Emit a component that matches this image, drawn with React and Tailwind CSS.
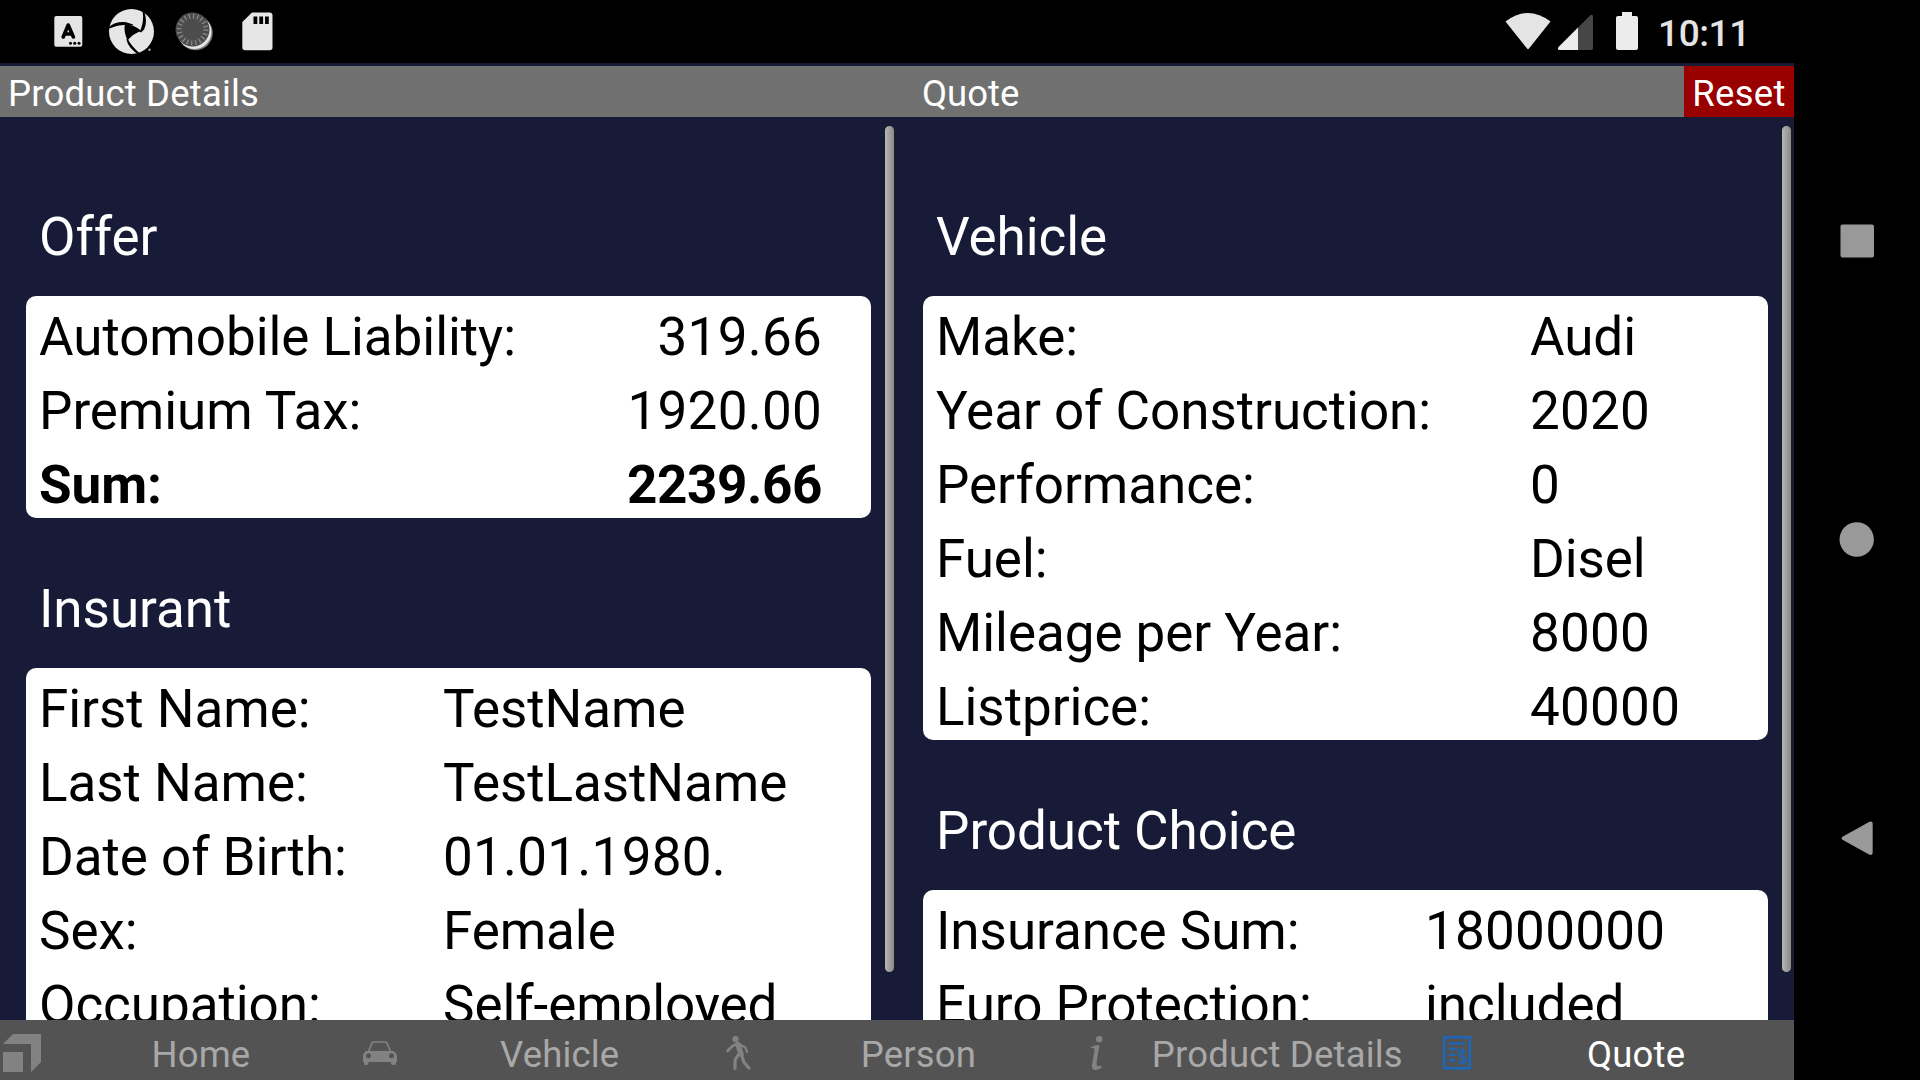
const offer = [
  ["Automobile Liability:", "319.66"],
  ["Premium Tax:", "1920.00"],
  ["Sum:", "2239.66"],
];
const insurant = [
  ["First Name:", "TestName"],
  ["Last Name:", "TestLastName"],
  ["Date of Birth:", "01.01.1980."],
  ["Sex:", "Female"],
  ["Occupation:", "Self-employed"],
];
const vehicle = [
  ["Make:", "Audi"],
  ["Year of Construction:", "2020"],
  ["Performance:", "0"],
  ["Fuel:", "Disel"],
  ["Mileage per Year:", "8000"],
  ["Listprice:", "40000"],
];
const product = [
  ["Insurance Sum:", "18000000"],
  ["Euro Protection:", "included"],
];

function valueTracking(value, bold) {
  if (bold) return "tracking-[-0.4px]";
  return /^[\d.]+$/.test(value) ? "tracking-[0.25px]" : "tracking-[-0.08px]";
}

function Section({ title, rows, cols, numeric }) {
  return (
    <section className="flex shrink-0 flex-col">
      <h2 className="h-[150px] pl-[13px] pt-[54px] text-[53px] leading-[74px] tracking-[-0.05px] text-white">{title}</h2>
      <div className="rounded-[10px] bg-white px-[13px] text-black">
        {rows.map(([label, value], i) => {
          const bold = numeric && i === rows.length - 1;
          return (
            <div
              key={label}
              className={`grid h-[74px] pt-[8px] text-[53px] leading-[67px] ${cols} ${bold ? "font-bold" : ""}`}
            >
              <span className="whitespace-nowrap tracking-[-0.05px]">{label}</span>
              <span className={`whitespace-nowrap ${valueTracking(value, bold)} ${numeric ? "pr-[36px] text-right" : ""}`}>
                {value}
              </span>
            </div>
          );
        })}
      </div>
    </section>
  );
}

function Column({ children }) {
  return (
    <div className="relative h-[903px] w-[897px] overflow-hidden">
      <div className="flex flex-col pl-[26px] pr-[26px] pt-[29px]">{children}</div>
      <div className="absolute right-[2px] top-[8px] h-[848px] w-[11px] rounded-full border border-[#1c1c28] bg-linear-to-r from-[#b6b6b6] to-[#8a8a8a]" />
    </div>
  );
}

function StatusBar() {
  return (
    <div className="flex h-[63px] bg-black">
      <svg width="300" height="63" viewBox="0 0 300 63">
        <rect x="54.3" y="16" width="28" height="30.7" rx="2" fill="#e4e4e4" />
        <path d="M63.2 37 68.2 25 73.4 37M65.5 34h5.500" fill="none" stroke="#000" strokeWidth="3.600" strokeLinecap="round" strokeLinejoin="round" />
        <g fill="#000">
          <circle cx="70.5" cy="43.2" r="1.500" />
          <circle cx="74.7" cy="43.2" r="1.500" />
          <circle cx="79" cy="43.2" r="1.500" />
        </g>
        <circle cx="131.5" cy="31.5" r="22.5" fill="#e6e6e6" />
        <path d="M124.800 24 Q134 24.500 141.500 31 Q133 33.500 127.500 40.500 Q123.500 32 124.800 24Z" fill="#000" />
        <path d="M109 28 Q115 22 126 22.800 L133 25 Q121 22.500 109 28Z" fill="#000" stroke="#000" strokeWidth="1.200" />
        <path d="M143.500 12 Q147 21 143.500 29 L140.500 32 Q145 22 143.500 12Z" fill="#000" stroke="#000" strokeWidth="1.500" />
        <path d="M127 39 Q129 48 140 54.500 Q131 47 127 39Z" fill="#000" stroke="#000" strokeWidth="1.500" />
        <circle cx="149.5" cy="49.7" r="1.2" fill="#aaa" />
        <circle cx="195.5" cy="33" r="17.3" fill="#777" />
        <circle cx="194.5" cy="32" r="17" fill="#e4e4e4" />
        <circle cx="192.5" cy="29.5" r="17" fill="#4c4c4c" />
        <circle cx="192.5" cy="29.5" r="13.3" fill="none" stroke="#888" strokeWidth="5" strokeDasharray="1.3 2.88" />
        <path d="M252 12.500H269.500Q272.500 12.500 272.500 15.500V47.500Q272.500 50.300 269.500 50.300H245.300Q242.300 50.300 242.300 47.500V22Z" fill="#e6e6e6" />
        <path d="M253.500 16.500h3.800v7.500h-3.800zM259.300 16.500h3.800v7.500h-3.800zM265 16.500h3.800v7.500h-3.800z" fill="#000" />
      </svg>
      <svg className="ml-[1200px]" width="150" height="63" viewBox="1500 0 150 63">
        <path d="M1505.500 21.500Q1528 4.500 1550.500 21.500L1529 48.500Q1528 49.500 1527 48.500Z" fill="#e4e4e4" />
        <path d="M1578 27.500 1590 15.500Q1593 13.500 1593 17V48Q1593 50 1591 50H1578Z" fill="#464646" />
        <path d="M1578 27.500V50H1559.500Q1556.800 49.500 1558.500 47Z" fill="#ececec" />
        <path d="M1622 12h10v4h4q2 0 2 2v30q0 2-2 2h-18q-2 0-2-2v-30q0-2 2-2h4z" fill="#ececec" />
      </svg>
      <div className="pl-[8px] pt-[12px] text-[37px] font-medium leading-[44px] tracking-[-0.4px] text-[#e4e4e4]">10:11</div>
    </div>
  );
}

const icons = {
  home: <path d="M13 14H41V42L31 52V24H3ZM3 32H23V52H3Z" fill="#828282" />,
  car: (
    <g>
      <path d="M9.500 31.500 13 23Q13.500 22 14.500 22H26.500Q27.500 22 28 23L31.500 31.500" fill="none" stroke="#828282" strokeWidth="1.700" />
      <path d="M7 31H34Q38 33 38 36.500V42H37V43.500Q37 45 34.500 45T32 43.500V42H9.500V43.500Q9.500 45 7 45T5 43.500V42H4V36.500Q4 33 7 31Z" fill="#828282" />
      <circle cx="9.500" cy="35.700" r="2.500" fill="#535353" />
      <circle cx="32.500" cy="35.700" r="2.500" fill="#535353" />
    </g>
  ),
  person: (
    <g fill="none" stroke="#828282" strokeLinecap="round" strokeLinejoin="round">
      <circle cx="17.500" cy="19.200" r="3.100" fill="#828282" stroke="none" />
      <path d="M19 24 14.500 26 9.500 31" strokeWidth="2.700" />
      <path d="M21.500 24.500 27.500 27.500 29 32" strokeWidth="2.300" />
      <path d="M20 24.500 23 34" strokeWidth="5.500" />
      <path d="M20.500 34.500 17 40V48.500" strokeWidth="3.200" />
      <path d="M23.500 35 26 42.500 31 48" strokeWidth="3.200" />
    </g>
  ),
  info: (
    <g fill="#828282">
      <circle cx="23.200" cy="19.200" r="3.200" />
      <path d="M15 27Q18.500 25 23.500 25L20.500 43Q20 47 25.500 45.800V48Q22.500 50 18.500 50Q15.500 49.500 16 45L18.500 30Q19 27.500 15 28Z" />
    </g>
  ),
  quote: (
    <g fill="none" stroke="#1f66b4">
      <rect x="9.300" y="17.300" width="25.400" height="31" strokeWidth="2.800" />
      <path d="M14 23.500H30.500M14 29H23M14 34.700H20M14 40.400H20" strokeWidth="2.700" />
      <path d="M30.500 32.500Q29.500 30.500 27 30.500Q23.500 30.500 23.500 33.500Q23.500 35.700 27 36.500Q31 37.500 31 40Q31 43 27 43Q24 43 23 40.500M27.300 28V45.500" strokeWidth="1.900" />
    </g>
  ),
};

const tabs = [
  ["home", "Home"],
  ["car", "Vehicle"],
  ["person", "Person"],
  ["info", "Product Details"],
  ["quote", "Quote"],
];

export default function App() {
  return (
    <div className="flex h-[1080px] w-[1920px] overflow-hidden bg-black font-['Roboto',sans-serif]">
      <main className="flex w-[1794px] flex-col bg-[#181b37]">
        <StatusBar />
        <header className="mt-[3px] flex h-[51px] bg-[#707070] text-[36.500px] leading-[55px] text-white">
          <div className="w-[914px] pl-[8px] tracking-[0.18px]">Product Details</div>
          <div className="grow pl-[8px]">Quote</div>
          <button className="w-[110px] bg-[#990000] text-center leading-[55px] tracking-[0.3px]">Reset</button>
        </header>
        <div className="flex">
          <Column>
            <Section title="Offer" rows={offer} cols="grid-cols-[1fr_auto]" numeric />
            <Section title="Insurant" rows={insurant} cols="grid-cols-[404px_1fr]" />
          </Column>
          <Column>
            <Section title="Vehicle" rows={vehicle} cols="grid-cols-[594px_1fr]" />
            <Section title="Product Choice" rows={product} cols="grid-cols-[489px_1fr]" />
          </Column>
        </div>
        <nav className="grid h-[60px] grid-cols-5 bg-[#535353] text-[36.500px] leading-[70px]">
          {tabs.map(([icon, label]) => (
            <div key={label} className="flex h-[60px]">
              <svg className="shrink-0" width="44" height="60" viewBox="0 0 44 60">{icons[icon]}</svg>
              <span
                className={`grow whitespace-nowrap pr-px text-center tracking-[0.18px] ${
                  icon === "quote" ? "text-white" : "text-[#a8a8a8]"
                }`}
              >
                {label}
              </span>
            </div>
          ))}
        </nav>
      </main>
      <aside className="flex grow flex-col">
        <svg width="126" height="1080" viewBox="1794 0 126 1080" fill="#999">
          <rect x="1840.500" y="224.500" width="33.500" height="33" rx="2" />
          <circle cx="1856.700" cy="539.500" r="17.200" />
          <path d="M1843 836.500 1869 822Q1872.700 820.500 1872.700 824V852Q1872.700 856 1869 854.500L1843 840Q1840 838.300 1843 836.500Z" />
        </svg>
      </aside>
    </div>
  );
}
